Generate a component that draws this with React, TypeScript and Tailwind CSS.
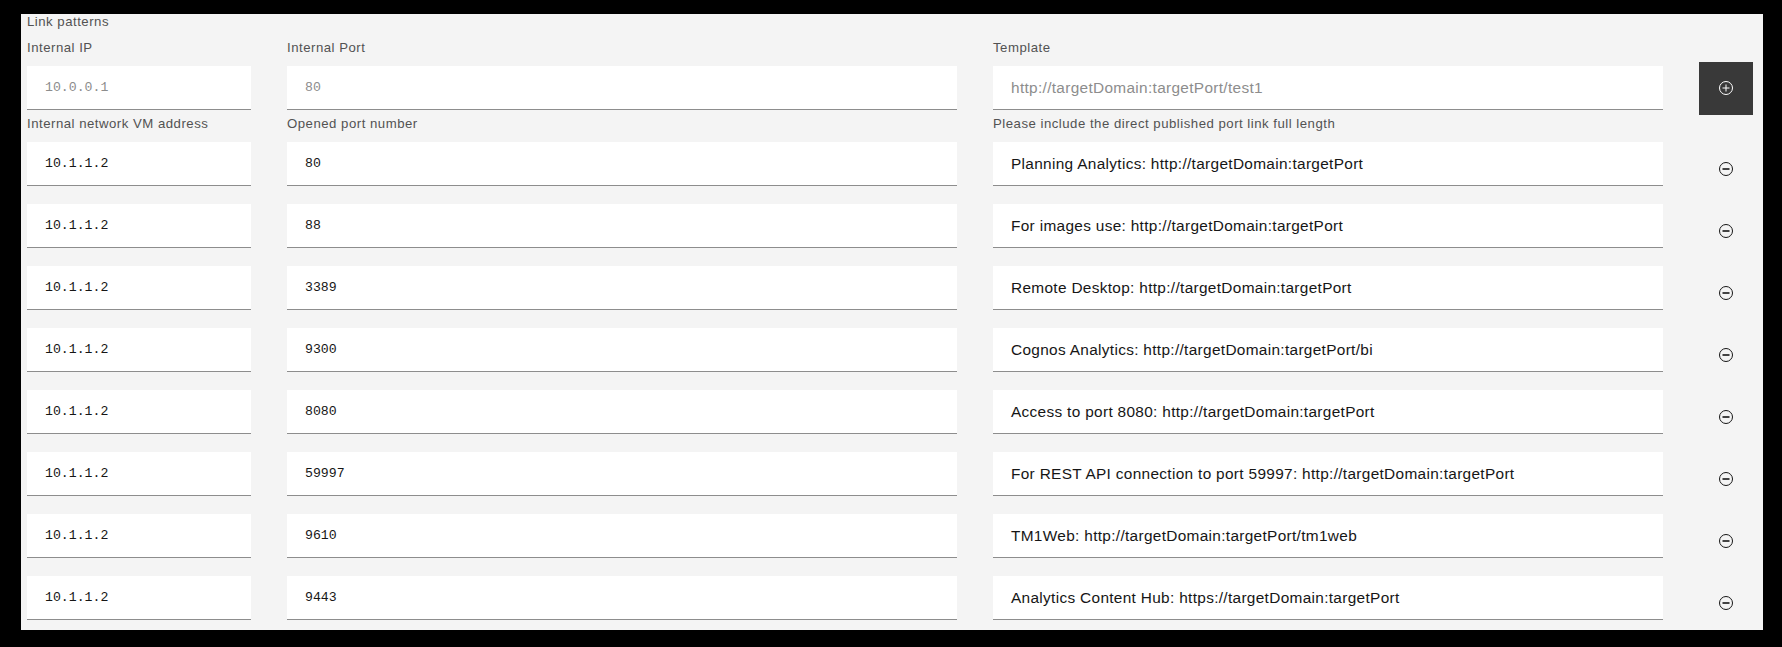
import React from "react";

const rows = [
  { ip: "10.1.1.2", port: "80", template: "Planning Analytics: http://targetDomain:targetPort" },
  { ip: "10.1.1.2", port: "88", template: "For images use: http://targetDomain:targetPort" },
  { ip: "10.1.1.2", port: "3389", template: "Remote Desktop: http://targetDomain:targetPort" },
  { ip: "10.1.1.2", port: "9300", template: "Cognos Analytics: http://targetDomain:targetPort/bi" },
  { ip: "10.1.1.2", port: "8080", template: "Access to port 8080: http://targetDomain:targetPort" },
  { ip: "10.1.1.2", port: "59997", template: "For REST API connection to port 59997: http://targetDomain:targetPort" },
  { ip: "10.1.1.2", port: "9610", template: "TM1Web: http://targetDomain:targetPort/tm1web" },
  { ip: "10.1.1.2", port: "9443", template: "Analytics Content Hub: https://targetDomain:targetPort" },
];

const sans = "font-['Liberation_Sans',Arial,sans-serif]";
const mono = "font-['Liberation_Mono','Courier_New',monospace]";
const grid = "grid grid-cols-[224px_1fr_1fr_54px] gap-x-9";
const label = "text-[13.2px] leading-4 tracking-[0.5px] text-[#525252]";

function Field({ value, placeholder, isMono }: { value?: string; placeholder?: string; isMono?: boolean }) {
  return (
    <div
      className={`h-11 bg-white border-b border-[#8d8d8d] px-[18px] flex items-center whitespace-nowrap ${
        isMono ? `${mono} text-[13.2px]` : `${sans} text-[15.4px] tracking-[0.32px]`
      } ${value ? "text-[#161616]" : "text-[#8d8d8d]"}`}
    >
      {value ?? placeholder}
    </div>
  );
}

function AddIcon() {
  return (
    <svg viewBox="0 0 16 16" className="w-4 h-4" fill="none" stroke="currentColor" strokeWidth={1}>
      <circle cx="8" cy="8" r="6.5" />
      <path d="M8 4.5v7M4.5 8h7" />
    </svg>
  );
}

function RemoveIcon() {
  return (
    <svg viewBox="0 0 16 16" className="w-4 h-4" fill="none" stroke="currentColor">
      <circle cx="8" cy="8" r="6.5" strokeWidth={1} />
      <path d="M4.5 8h7" strokeWidth={1.6} />
    </svg>
  );
}

export default function App() {
  return (
    <div className="min-h-screen bg-black pt-[14px] pl-[21px]">
      <div className={`w-[1742px] bg-[#f4f4f4] pl-[6px] pr-[10px] pb-[10px] ${sans}`}>
        <p className={label}>Link patterns</p>

        {/* Template row */}
        <div className={`${grid} mt-[10px] ${label}`}>
          <span>Internal IP</span>
          <span>Internal Port</span>
          <span>Template</span>
          <span />
        </div>
        <div className={`${grid} mt-[10px]`}>
          <Field placeholder="10.0.0.1" isMono />
          <Field placeholder="80" isMono />
          <Field placeholder="http://targetDomain:targetPort/test1" />
          <div className="h-11 flex items-center">
            <button className="w-[54px] h-[53px] shrink-0 bg-[#393939] text-white flex items-center justify-center">
              <AddIcon />
            </button>
          </div>
        </div>

        {/* Existing patterns */}
        <div className={`${grid} mt-[6px] ${label}`}>
          <span>Internal network VM address</span>
          <span>Opened port number</span>
          <span>Please include the direct published port link full length</span>
          <span />
        </div>
        <div className="mt-[10px] flex flex-col gap-[18px]">
          {rows.map((r, i) => (
            <div key={i} className={grid}>
              <Field value={r.ip} isMono />
              <Field value={r.port} isMono />
              <Field value={r.template} />
              <div className="h-11 pt-[10px] flex items-center justify-center text-[#161616]">
                <RemoveIcon />
              </div>
            </div>
          ))}
        </div>
      </div>
    </div>
  );
}
